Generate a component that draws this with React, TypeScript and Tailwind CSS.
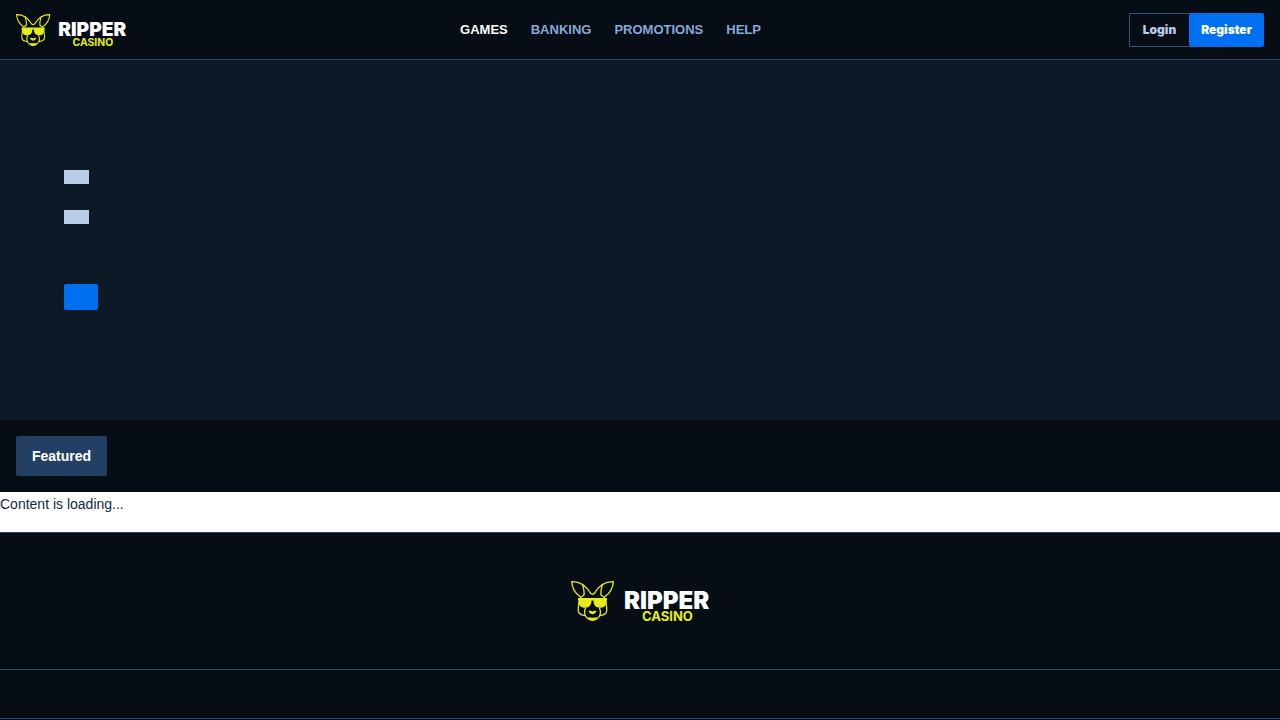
import React from 'react';

const NAV_ITEMS = [
  { label: 'GAMES', href: '#games', active: true },
  { label: 'BANKING', href: '#banking', active: false },
  { label: 'PROMOTIONS', href: '#promotions', active: false },
  { label: 'HELP', href: '#help', active: false },
];

function Logo({ className }: { className: string }) {
  return (
    <svg viewBox="0 0 138 40" className={className} role="img" aria-label="Ripper Casino">
      <g fill="none" stroke="#e6ec1c" strokeWidth="1.3" strokeLinecap="round" strokeLinejoin="round">
        {/* ears */}
        <path d="M9.500 16C4.500 12.500 1 7 .7.7 8 .5 15 4.500 19.500 12.300M33.500 16C38.500 12.500 42 7 42.300.7 35 .5 28 4.500 23.500 12.300" />
        <path d="M11.500 3.500C12.500 7 13.500 10 13 13.500M31.500 3.500C30.500 7 29.500 10 30 13.500" />
        <path d="M19.500 12.300l2 1.200 2-1.200M9.500 16.500l3.500-2.500M33.500 16.500l-3.500-2.500" />
        {/* cheeks and jaw */}
        <path d="M8 20C8 24 6.500 27 7.500 31c1 3 3.500 3 6.500 3.500M35 20C35 24 36.500 27 35.500 31c-1 3-3.500 3-6.500 3.500" />
        <path d="M14.500 27C13.500 29.500 13 32.500 14.500 35c1.500 2.500 4.500 4.300 7 4.300s5.500-1.800 7-4.300c1.500-2.500 1-5.500 0-8" />
      </g>
      <g fill="#e6ec1c">
        <path d="M7 17h29v2.200l-.7.500c.2 4.500-1.800 7-6.300 7-4.300 0-6.500-2.500-6.500-7.200h-2c0 4.700-2.200 7.200-6.500 7.200-4.500 0-6.500-2.500-6.300-7l-.7-.5z" />
        <path d="M17.500 30c2.200-.5 3 .6 4 .6s1.800-1.100 4-.6c-.5 1.800-2.500 3.300-4 3.300s-3.500-1.500-4-3.300z" />
        <path d="M16.500 36c3 1 7 1 10 0-1 2.400-3.200 3.500-5 3.500s-4-1.100-5-3.500z" />
      </g>
      <text x="53" y="28" fill="#ffffff" className="font-['Inter',sans-serif] text-[24px] font-black">
        RIPPER
      </text>
      <text x="71" y="40" fill="#e6ec1c" className="font-['Inter',sans-serif] text-[13px] font-bold">
        CASINO
      </text>
    </svg>
  );
}

function Header() {
  return (
    <header className="flex h-[60px] items-center border-b border-[#2b436b] bg-[#060d14] px-4">
      <a href="#home" className="shrink-0">
        <Logo className="h-8 w-[110px] overflow-visible" />
      </a>
      <nav className="flex flex-1 justify-center gap-[23px] pt-0.5 pr-[34px] text-[13px] font-bold">
        {NAV_ITEMS.map((item) => (
          <a key={item.label} href={item.href} className={item.active ? 'text-white' : 'text-[#86a8d8]'}>
            {item.label}
          </a>
        ))}
      </nav>
      <div className="flex shrink-0 font-['Inter',sans-serif] text-[12px] font-black">
        <button
          type="button"
          className="h-[34px] w-[60px] rounded-l-xs border border-r-0 border-[#34537f] text-[#b8cce8]"
        >
          Login
        </button>
        <button type="button" className="h-[34px] w-[75px] rounded-xs bg-[#0070f3] text-white">
          Register
        </button>
      </div>
    </header>
  );
}

function Hero() {
  return (
    <section className="flex h-[360px] flex-col items-start justify-center bg-[#0d1926] px-16">
      <div className="h-3.5 w-[25px] bg-[#b8cce8]" />
      <div className="mt-[26px] h-3.5 w-[25px] bg-[#b8cce8]" />
      <button type="button" aria-label="Play" className="mt-[60px] h-[26px] w-[34px] rounded-xs bg-[#0070f3]" />
    </section>
  );
}

export default function App(): React.JSX.Element {
  return (
    <div className="min-h-screen bg-[#060d14] font-['Liberation_Sans',Arial,sans-serif] text-sm">
      <Header />
      <main>
        <Hero />
        <div className="p-4">
          <button type="button" className="h-10 rounded-xs bg-[#233f63] px-4 font-bold text-white">
            Featured
          </button>
        </div>
        <div className="bg-white pb-4 leading-6 text-[#0f2a4a]">
          <p>Content is loading...</p>
        </div>
      </main>
      <footer>
        <div className="flex justify-center border-y border-[#2b436b] py-12">
          <Logo className="h-10 w-[138px] overflow-visible" />
        </div>
        <div className="h-[49px] border-b border-[#2b436b]" />
      </footer>
    </div>
  );
}
